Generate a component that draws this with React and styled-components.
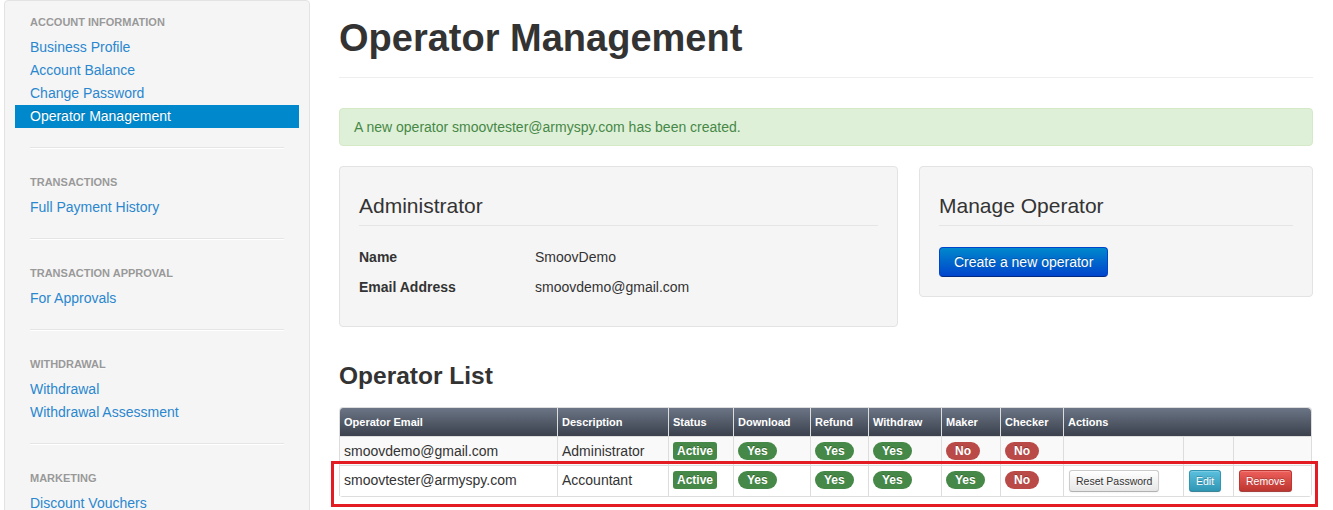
import styled, { createGlobalStyle } from 'styled-components';

const GlobalStyle = createGlobalStyle`
    body {
        margin: 0;
        background: #fff;
        font-family: "Liberation Sans", Arial, sans-serif;
        font-size: 14px;
        color: #333;
    }
`;

const NAV = [
    { title: 'Account Information', links: ['Business Profile', 'Account Balance', 'Change Password', 'Operator Management'] },
    { title: 'Transactions', links: ['Full Payment History'] },
    { title: 'Transaction Approval', links: ['For Approvals'] },
    { title: 'Withdrawal', links: ['Withdrawal', 'Withdrawal Assessment'] },
    { title: 'Marketing', links: ['Discount Vouchers'] },
];

const OPERATORS = [
    { email: 'smoovdemo@gmail.com', desc: 'Administrator', flags: [true, true, true, false, false], actions: false },
    { email: 'smoovtester@armyspy.com', desc: 'Accountant', flags: [true, true, true, true, false], actions: true },
];

const App = () => {
    return (
        <>
            <GlobalStyle />
            <Page>
                <Sidebar>
                    <NavList>
                        {NAV.map((section, i) => (
                            <div key={section.title}>
                                {i > 0 && <Divider />}
                                <NavHeader>{section.title}</NavHeader>
                                {section.links.map(link => (
                                    <NavLink key={link} active={link === 'Operator Management'}>{link}</NavLink>
                                ))}
                            </div>
                        ))}
                    </NavList>
                </Sidebar>

                <Main>
                    <PageHeader>Operator Management</PageHeader>
                    <Alert>A new operator smoovtester@armyspy.com has been created.</Alert>

                    <Cards>
                        <Well>
                            <WellTitle>Administrator</WellTitle>
                            <InfoRow>
                                <InfoLabel>Name</InfoLabel>
                                <span>SmoovDemo</span>
                            </InfoRow>
                            <InfoRow>
                                <InfoLabel>Email Address</InfoLabel>
                                <span>smoovdemo@gmail.com</span>
                            </InfoRow>
                        </Well>
                        <Well>
                            <WellTitle>Manage Operator</WellTitle>
                            <PrimaryBtn>Create a new operator</PrimaryBtn>
                        </Well>
                    </Cards>

                    <SectionTitle>Operator List</SectionTitle>
                    <TableWrap>
                        <Table>
                            <colgroup>
                                <col style={{ width: 218 }} />
                                <col style={{ width: 111 }} />
                                <col style={{ width: 65 }} />
                                <col style={{ width: 77 }} />
                                <col style={{ width: 58 }} />
                                <col style={{ width: 73 }} />
                                <col style={{ width: 59 }} />
                                <col style={{ width: 63 }} />
                                <col style={{ width: 120 }} />
                                <col style={{ width: 50 }} />
                                <col style={{ width: 78 }} />
                            </colgroup>
                            <thead>
                                <tr>
                                    <Th>Operator Email</Th>
                                    <Th>Description</Th>
                                    <Th>Status</Th>
                                    <Th>Download</Th>
                                    <Th>Refund</Th>
                                    <Th>Withdraw</Th>
                                    <Th>Maker</Th>
                                    <Th>Checker</Th>
                                    <Th colSpan={3}>Actions</Th>
                                </tr>
                            </thead>
                            <tbody>
                                {OPERATORS.map((op, i) => (
                                    <Tr key={op.email} striped={i % 2 === 0}>
                                        <Td>{op.email}</Td>
                                        <Td>{op.desc}</Td>
                                        <Td><Label>Active</Label></Td>
                                        {op.flags.map((f, j) => (
                                            <Td key={j}><Badge yes={f}>{f ? 'Yes' : 'No'}</Badge></Td>
                                        ))}
                                        <Td>{op.actions && <MiniBtn variant="default">Reset Password</MiniBtn>}</Td>
                                        <Td>{op.actions && <MiniBtn variant="info">Edit</MiniBtn>}</Td>
                                        <Td>{op.actions && <MiniBtn variant="danger">Remove</MiniBtn>}</Td>
                                    </Tr>
                                ))}
                            </tbody>
                        </Table>
                        <Highlight />
                    </TableWrap>
                </Main>
            </Page>
        </>
    );
};

export default App;

const Page = styled.div`
    display: grid;
    grid-template-columns: 306px 974px;
    column-gap: 29px;
    padding-left: 4px;
    height: 510px;
    overflow: hidden;
`;

const Sidebar = styled.div`
    background: #f5f5f5;
    border: 1px solid #e3e3e3;
    border-radius: 4px;
    padding: 8px 0 20px;
    align-self: start;
`;

const NavList = styled.div`
    padding: 0 25px;
`;

const NavHeader = styled.div`
    padding: 3px 0 4px;
    line-height: 20px;
    font-size: 11px;
    font-weight: bold;
    text-transform: uppercase;
    color: #999;
    text-shadow: 0 1px 0 rgba(255, 255, 255, 0.5);
`;

const NavLink = styled.a`
    display: block;
    margin: 0 -15px;
    padding: 3px 15px;
    line-height: 17px;
    font-size: 14px;
    color: ${props => props.active ? '#fff' : '#2a87cf'};
    background: ${props => props.active ? '#0088cc' : 'transparent'};
    text-shadow: ${props => props.active ? '0 -1px 0 rgba(0,0,0,0.2)' : 'none'};
    cursor: pointer;
`;

const Divider = styled.div`
    height: 1px;
    margin: 19px 0 20px;
    background: #e5e5e5;
    border-bottom: 1px solid #fff;
`;

const Main = styled.div`
    padding-top: 18px;
`;

const PageHeader = styled.h1`
    margin: 0;
    padding-bottom: 19px;
    border-bottom: 1px solid #eee;
    font-size: 38px;
    line-height: 40px;
    font-weight: bold;
    color: #333;
`;

const Alert = styled.div`
    margin-top: 30px;
    padding: 8px 14px;
    line-height: 20px;
    background: #dff0d8;
    border: 1px solid #d6e9c6;
    border-radius: 4px;
    color: #468847;
`;

const Cards = styled.div`
    display: grid;
    grid-template-columns: 559px 394px;
    column-gap: 21px;
    align-items: start;
    margin-top: 20px;
`;

const Well = styled.div`
    background: #f5f5f5;
    border: 1px solid #e3e3e3;
    border-radius: 4px;
    padding: 20px 19px 19px;
`;

const WellTitle = styled.div`
    font-size: 21px;
    line-height: 38px;
    color: #333;
    border-bottom: 1px solid #e5e5e5;
    margin-bottom: 21px;
`;

const InfoRow = styled.div`
    display: grid;
    grid-template-columns: 176px 1fr;
    line-height: 20px;
    margin-bottom: 10px;
`;

const InfoLabel = styled.span`
    font-weight: bold;
`;

const PrimaryBtn = styled.button`
    display: block;
    padding: 4px 14px;
    font-family: inherit;
    font-size: 14px;
    line-height: 20px;
    color: #fff;
    text-shadow: 0 -1px 0 rgba(0, 0, 0, 0.25);
    background: linear-gradient(to bottom, #0088cc, #0044cc);
    border: 1px solid #0044cc;
    border-bottom-color: #002a80;
    border-radius: 4px;
    cursor: pointer;
`;

const SectionTitle = styled.h2`
    margin: 29px 0 11px;
    font-size: 24.5px;
    line-height: 40px;
    font-weight: bold;
    color: #333;
`;

const TableWrap = styled.div`
    position: relative;
    width: 973px;
`;

const Table = styled.table`
    width: 100%;
    table-layout: fixed;
    border-collapse: separate;
    border-spacing: 0;
    border: 1px solid #ddd;
    border-left: 0;
    border-radius: 4px;
`;

const Th = styled.th`
    padding: 4px 5px 4px 4px;
    line-height: 20px;
    font-size: 11px;
    font-weight: bold;
    text-align: left;
    color: #fff;
    background: linear-gradient(to bottom, #6b7585, #3b414d);
    border-left: 1px solid #ddd;
    white-space: nowrap;
    &:first-child {
        border-top-left-radius: 4px;
    }
    &:last-child {
        border-top-right-radius: 4px;
    }
`;

const Tr = styled.tr`
    background: ${props => props.striped ? '#f9f9f9' : '#fff'};
`;

const Td = styled.td`
    padding: 4px 5px 4px 4px;
    line-height: 20px;
    font-size: 14px;
    color: #333;
    border-top: 1px solid #ddd;
    border-left: 1px solid #ddd;
    white-space: nowrap;
    vertical-align: top;
`;

const Label = styled.span`
    display: inline-block;
    padding: 2px 4px;
    font-size: 12px;
    font-weight: bold;
    line-height: 14px;
    color: #fff;
    background: #468847;
    border-radius: 3px;
    text-shadow: 0 -1px 0 rgba(0, 0, 0, 0.25);
    vertical-align: 1px;
`;

const Badge = styled.span`
    display: inline-block;
    padding: 2px 9px;
    font-size: 12px;
    font-weight: bold;
    line-height: 14px;
    color: #fff;
    background: ${props => props.yes ? '#468847' : '#b94a48'};
    border-radius: 9px;
    text-shadow: 0 -1px 0 rgba(0, 0, 0, 0.25);
    vertical-align: 1px;
`;

const BTN = {
    default: { bg: 'linear-gradient(to bottom, #ffffff, #e6e6e6)', color: '#333', border: '#cccccc', shadow: 'rgba(255,255,255,0.75)' },
    info: { bg: 'linear-gradient(to bottom, #5bc0de, #2f96b4)', color: '#fff', border: '#2f96b4', shadow: 'rgba(0,0,0,0.25)' },
    danger: { bg: 'linear-gradient(to bottom, #ee5f5b, #bd362f)', color: '#fff', border: '#bd362f', shadow: 'rgba(0,0,0,0.25)' },
};

const MiniBtn = styled.button`
    display: inline-block;
    margin-left: 1px;
    padding: 0 6px;
    font-family: inherit;
    font-size: 10.5px;
    line-height: 20px;
    color: ${props => BTN[props.variant].color};
    background: ${props => BTN[props.variant].bg};
    border: 1px solid ${props => BTN[props.variant].border};
    border-bottom-color: rgba(0, 0, 0, 0.3);
    border-radius: 3px;
    text-shadow: 0 ${props => props.variant === 'default' ? '1px' : '-1px'} 0 ${props => BTN[props.variant].shadow};
    box-shadow: inset 0 1px 0 rgba(255, 255, 255, 0.2), 0 1px 2px rgba(0, 0, 0, 0.05);
    cursor: pointer;
`;

// red annotation box drawn over the second row
const Highlight = styled.div`
    position: absolute;
    left: -8px;
    right: -6px;
    top: 54px;
    bottom: -10px;
    border: 3px solid #e31b23;
    pointer-events: none;
`;
